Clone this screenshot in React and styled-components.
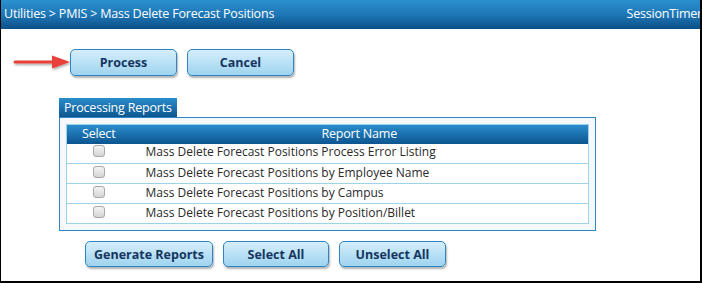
import React from "react";
import styled, { createGlobalStyle } from "styled-components";

const GlobalStyle = createGlobalStyle`
  html, body { margin: 0; padding: 0; background: #fff; }
  body { font-family: "Open Sans", "Noto Sans", Arial, sans-serif; }
  * { box-sizing: border-box; }
`;

const Frame = styled.div`
  width: 702px;
  height: 283px;
  border-left: 1px solid #000;
  border-right: 2px solid #000;
  border-bottom: 2px solid #000;
  overflow: hidden;
  background: #fff;
`;

const Header = styled.div`
  height: 29px;
  display: flex;
  align-items: center;
  justify-content: space-between;
  padding: 0 0 2px 3px;
  background: linear-gradient(#2b90cf, #1c74b3 55%, #0b4f87);
  color: #fff;
  font-size: 12.5px;
  white-space: nowrap;
`;

const Crumb = styled.span`
  letter-spacing: -0.2px;
`;
const Timer = styled.span`
  margin-right: -2px;
  letter-spacing: -0.2px;
`;

const Body = styled.div`
  padding: 20px 0 0 0;
`;

const TopRow = styled.div`
  display: flex;
  align-items: center;
  padding-left: 12px;
  gap: 10px;
`;

const Arrow = styled.svg`
  width: 58px;
  height: 18px;
  margin-right: -11px;
  display: block;
`;

const Button = styled.button`
  width: ${(p) => p.$w}px;
  height: ${(p) => p.$h || 27}px;
  border: 1px solid #2d86c2;
  border-radius: 5px;
  background: linear-gradient(#d6eefa, #b9e1f6 50%, #9fd3ef);
  box-shadow: 1px 2px 2px rgba(0, 0, 0, 0.3);
  color: #15355f;
  font-family: "Open Sans", "Noto Sans", Arial, sans-serif;
  font-weight: 700;
  font-size: 12.5px;
  padding: 0;
  cursor: pointer;
`;

const Group = styled.div`
  margin: 22px 0 0 58px;
  width: 537px;
`;

const Legend = styled.div`
  width: 118px;
  height: 19px;
  background: linear-gradient(#2a8ccb, #0d5790);
  color: #fff;
  font-size: 12.5px;
  line-height: 19px;
  padding-left: 5px;
  letter-spacing: -0.2px;
  white-space: nowrap;
`;

const Box = styled.div`
  border: 1px solid #2e86c3;
  background: #f5f8fa;
  padding: 6px;
`;

const Table = styled.table`
  width: 523px;
  border-collapse: collapse;
  border: 1px solid #9bd2ec;
  background: #fff;
  font-size: 12px;
  color: #2a2a2a;
`;

const HeadRow = styled.tr`
  background: linear-gradient(#2a8ccb, #0c5590);
`;

const Th = styled.th`
  height: 19px;
  color: #fff;
  font-weight: 400;
  font-size: 12.5px;
  line-height: 16px;
  letter-spacing: -0.2px;
  padding: 0 0 1px 0;
  width: ${(p) => (p.$w ? `${p.$w}px` : "auto")};
  text-align: center;
`;

const Row = styled.tr`
  border-bottom: 1px solid #9bd2ec;
`;

const CheckCell = styled.td`
  height: 20px;
  line-height: 12px;
  text-align: center;
  padding: 0 0 4px 0;
  vertical-align: middle;
`;

const Check = styled.span`
  display: inline-block;
  width: 12px;
  height: 12px;
  border: 1px solid #a9a9a9;
  border-radius: 3px;
  background: linear-gradient(#f4f4f4, #d4d4d4);
  vertical-align: top;
`;

const NameCell = styled.td`
  height: 20px;
  line-height: 16px;
  padding: 0 0 2px 15px;
  white-space: nowrap;
`;

const BottomRow = styled.div`
  display: flex;
  gap: 10px;
  margin: 10px 0 0 84px;
`;

const reports = [
  "Mass Delete Forecast Positions Process Error Listing",
  "Mass Delete Forecast Positions by Employee Name",
  "Mass Delete Forecast Positions by Campus",
  "Mass Delete Forecast Positions by Position/Billet",
];

export default function App() {
  return (
    <>
      <GlobalStyle />
      <Frame>
        <Header>
          <Crumb>Utilities &gt; PMIS &gt; Mass Delete Forecast Positions</Crumb>
          <Timer>SessionTimer</Timer>
        </Header>
        <Body>
          <TopRow>
            <Arrow viewBox="0 0 58 18">
              <defs>
                <filter id="sh" x="-10%" y="-50%" width="130%" height="200%">
                  <feDropShadow dx="1" dy="1.5" stdDeviation="1" floodColor="#000" floodOpacity="0.35" />
                </filter>
              </defs>
              <g filter="url(#sh)">
                <line x1="2" y1="8" x2="42" y2="8" stroke="#e8403a" strokeWidth="3" strokeLinecap="round" />
                <path d="M39 1.5 L57 8 L39 14.5 Z" fill="#e8403a" />
              </g>
            </Arrow>
            <Button $w={107}>Process</Button>
            <Button $w={107}>Cancel</Button>
          </TopRow>
          <Group>
            <Legend>Processing Reports</Legend>
            <Box>
              <Table>
                <thead>
                  <HeadRow>
                    <Th $w={64}>Select</Th>
                    <Th>Report Name</Th>
                  </HeadRow>
                </thead>
                <tbody>
                  {reports.map((r) => (
                    <Row key={r}>
                      <CheckCell>
                        <Check />
                      </CheckCell>
                      <NameCell>{r}</NameCell>
                    </Row>
                  ))}
                </tbody>
              </Table>
            </Box>
          </Group>
          <BottomRow>
            <Button $w={128} $h={26}>Generate Reports</Button>
            <Button $w={106} $h={26}>Select All</Button>
            <Button $w={107} $h={26}>Unselect All</Button>
          </BottomRow>
        </Body>
      </Frame>
    </>
  );
}
